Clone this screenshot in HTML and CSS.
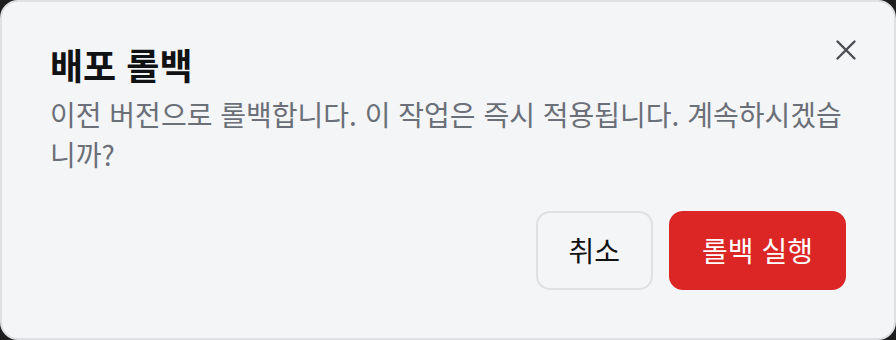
FILE: index.html
```html
<!DOCTYPE html>
<html lang="ko">
<head>
    <meta charset="UTF-8">
    <meta name="viewport" content="width=device-width, initial-scale=1">
    <title>배포 롤백</title>
    <link rel="stylesheet" href="styles.css">
</head>
<body>

    <!-- Rollback confirm dialog -->
    <div class="dialog" role="dialog" aria-labelledby="dialog-title">
        <button class="close-btn" aria-label="닫기">
            <svg width="22" height="22" viewBox="0 0 22 22" fill="none" stroke="currentColor" stroke-width="2.4" stroke-linecap="round">
                <path d="M2.5 2.5 L19.5 19.5 M19.5 2.5 L2.5 19.5"/>
            </svg>
        </button>

        <h2 id="dialog-title" class="dialog-title">배포 롤백</h2>
        <p class="dialog-text">이전 버전으로 롤백합니다. 이 작업은 즉시 적용됩니다. 계속하시겠습니까?</p>

        <div class="dialog-actions">
            <button class="btn btn-cancel">취소</button>
            <button class="btn btn-danger">롤백 실행</button>
        </div>
    </div>

</body>
</html>
```

FILE: styles.css
```css
body {
    margin: 0;
    background-color: #1e1e1e;
    font-family: "Noto Sans CJK KR", "Noto Sans", sans-serif;
}

.dialog {
    position: relative;
    box-sizing: border-box;
    width: 896px;
    height: 340px;
    display: flex;
    flex-direction: column;
    padding: 39px 48px 48px;
    background-color: #f4f5f7;
    border: 2px solid #dfe0e3;
    border-radius: 18px;
}

.close-btn {
    position: absolute;
    top: 37px;
    right: 37px;
    padding: 0;
    border: none;
    background: none;
    color: #4b4d52;
    cursor: pointer;
    display: flex;
}

.dialog-title {
    margin: 0;
    font-size: 36px;
    font-weight: 700;
    line-height: 47px;
    color: #111214;
}

.dialog-text {
    margin: 6px 0 0;
    font-size: 28px;
    line-height: 40px;
    color: #6b6f78;
}

.dialog-actions {
    margin-top: auto;
    display: flex;
    justify-content: flex-end;
    gap: 16px;
}

.btn {
    font-family: inherit;
    font-size: 28px;
    line-height: 43px;
    padding: 16px 31px;
    border-radius: 14px;
    cursor: pointer;
}

.btn-cancel {
    background-color: #f4f5f7;
    color: #111214;
    border: 2px solid #dfe0e3;
}

.btn-danger {
    background-color: #dc2626;
    color: #ffffff;
    border: 2px solid #dc2626;
}
```
